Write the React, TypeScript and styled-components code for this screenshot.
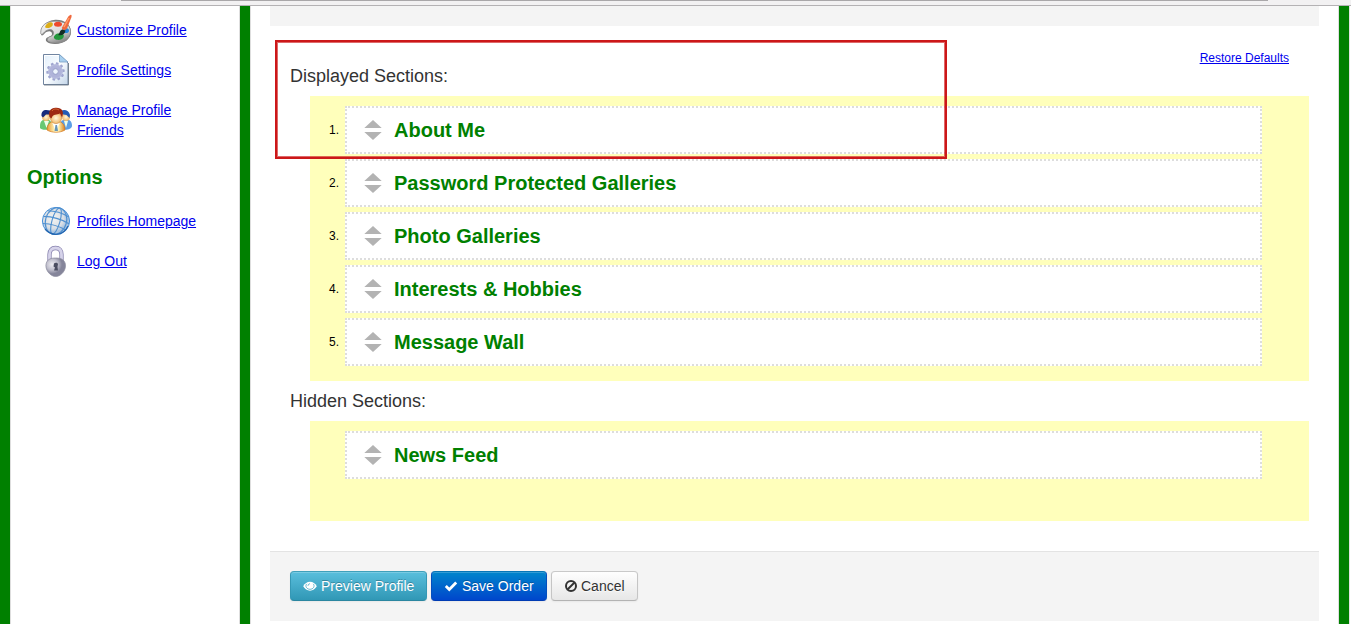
import React from "react";
import styled, { createGlobalStyle } from "styled-components";

const GlobalStyle = createGlobalStyle`
  * { box-sizing: border-box; }
  body {
    margin: 0;
    overflow: hidden;
    background: #fff;
    color: #333;
    font: 14px/20px "Liberation Sans", Arial, sans-serif;
  }
`;

const Page = styled.div`
  display: flex;
  flex-direction: column;
  width: 1351px;
  height: 624px;
  overflow: hidden;
`;

const BrowserEdge = styled.div`
  flex: none;
  height: 6px;
  padding: 0 83px 0 121px;
  background: #f2f1f2;
  border-bottom: 1px solid #b4b2b4;
`;

const AddressLine = styled.div`
  height: 1px;
  background: #a9a7a9;
`;

const Columns = styled.div`
  flex: 1;
  display: flex;
  min-height: 0;
`;

const Rail = styled.div`
  flex: none;
  width: 10px;
  background: #008000;
`;

const OuterEdge = styled.div`
  flex: none;
  width: 2px;
  background: #fff;
  border-left: 1px solid #e4e4e4;
`;

const Sidebar = styled.aside`
  flex: none;
  width: 230px;
  padding: 4px 16px 0;
  border: solid #dedede;
  border-width: 0 1px;
`;

const NavList = styled.nav`
  display: flex;
  flex-direction: column;
  padding-left: 10px;
`;

const NavRow = styled.div<{ $tall?: boolean }>`
  display: flex;
  align-items: center;
  height: ${(p) => (p.$tall ? 60 : 40)}px;
  gap: 5px;
  padding-left: 3px;
  svg { flex: none; }
`;

const Link = styled.a`
  color: #0000ee;
  text-decoration: underline;
  cursor: pointer;
`;

const NavLink = styled(Link)`
  width: 125px;
`;

const SideHeading = styled.h3`
  margin: 17px 0 14px;
  color: #008000;
  font-size: 20px;
  line-height: 20px;
`;

const Main = styled.main`
  flex: 1;
  display: flex;
  flex-direction: column;
  padding: 0 19px;
  border: solid #dedede;
  border-width: 0 1px;
`;

const TopPanel = styled.div`
  flex: none;
  height: 20px;
  background: #f4f4f4;
`;

const Content = styled.section`
  position: relative;
  flex: none;
  height: 525px;
  padding: 40px 10px 0 20px;
`;

const TitleRow = styled.div`
  display: flex;
  justify-content: space-between;
  height: 30px;
  padding-right: 20px;
`;

const Title = styled.h4`
  margin: 0;
  color: #333;
  font-size: 18px;
  font-weight: 400;
  line-height: 20px;
`;

const RestoreLink = styled(Link)`
  align-self: flex-start;
  margin-top: -18px;
  font-size: 12px;
`;

const DropZone = styled.ol<{ $height: number }>`
  display: flex;
  flex-direction: column;
  gap: 5px;
  height: ${(p) => p.$height}px;
  margin: 0 0 10px 20px;
  padding: 10px 47px 0 0;
  background: #ffffbb;
  list-style: none;
`;

const SectionItem = styled.li`
  display: grid;
  grid-template-columns: 29px 1fr;
  column-gap: 6px;
  align-items: center;
  height: 48px;
`;

const Ordinal = styled.span`
  color: #000;
  font-size: 12px;
  text-align: right;
`;

const SectionCard = styled.div`
  display: flex;
  align-items: center;
  gap: 12px;
  height: 48px;
  padding-left: 17px;
  background: #fff;
  border: 2px dotted #ddd;
  color: #008000;
  font-size: 20px;
  font-weight: 700;
  cursor: move;
`;

const Highlight = styled.div`
  position: absolute;
  top: 14px;
  left: 5px;
  width: 672px;
  height: 119px;
  border: 2px solid #cc1719;
  box-shadow: inset 0 0 0 1px rgba(204, 23, 25, 0.65);
  pointer-events: none;
`;

const FormActions = styled.footer`
  flex: none;
  display: flex;
  align-items: flex-start;
  gap: 4px;
  height: 70px;
  padding: 19px 20px;
  background: #f4f4f4;
  border-top: 1px solid #e3e3e3;
`;

type Tone = "info" | "primary" | "plain";

const tones: Record<Tone, string> = {
  info: `
    width: 137px; color: #fff;
    background-image: linear-gradient(#5bc0de, #2f96b4);
    border-color: #3fa0bb #3598b5 #2a86a0;
    text-shadow: 0 -1px 0 rgba(0,0,0,.25);`,
  primary: `
    width: 116px; color: #fff;
    background-image: linear-gradient(#0088cc, #0044cc);
    border-color: #0676b7 #044fbe #003bb3;
    text-shadow: 0 -1px 0 rgba(0,0,0,.25);`,
  plain: `
    width: 87px; color: #333;
    background-image: linear-gradient(#fff, #e6e6e6);
    border-color: #c9c9c9 #c5c5c5 #b3b3b3;
    text-shadow: 0 1px 1px rgba(255,255,255,.75);`,
};

const Button = styled.button<{ $tone: Tone }>`
  display: flex;
  align-items: center;
  height: 30px;
  padding: 0 0 0 12px;
  gap: ${(p) => (p.$tone === "plain" ? 3 : 4)}px;
  border: 1px solid;
  border-radius: 4px;
  box-shadow: inset 0 1px 0 rgba(255,255,255,.2), 0 1px 2px rgba(0,0,0,.05);
  background-origin: border-box;
  font: 14px/20px "Liberation Sans", Arial, sans-serif;
  white-space: nowrap;
  ${(p) => tones[p.$tone]}
  svg { flex: none; }
`;

const PaletteIcon = () => (
  <svg width="32" height="32" viewBox="0 0 32 32">
    <defs>
      <linearGradient id="pal" x1="0" y1="0" x2="0.5" y2="1">
        <stop offset="0" stopColor="#fbfbfb" />
        <stop offset="0.65" stopColor="#d9d9d9" />
        <stop offset="1" stopColor="#8f8f8f" />
      </linearGradient>
    </defs>
    <path d="M1 20C0 13 6 7 14 6c9-1 17 4 17 12 0 7-7 12-16 12-7 0-10-3-9-5 1-3 6-2 6-5 0-4-5-3-7-1-2 3-4 3-4 1z" fill="#777" />
    <path d="M.7 18.500C.7 11 7 7.500 14 7.200c9-.5 16.500 3 16.500 10.300 0 7-6.500 11.500-14.500 11.500-6 0-9.500-2-8.500-4 1-3 6-2 6-6 0-5-6-4-9-1-2 3-4 3-3.800.5z" fill="url(#pal)" stroke="#8c8c8c" strokeWidth=".8" />
    <path d="M5 13c1-3 3-4 4-4.500 3-1 4.500 0 3.500 3-1 2.500-6.500 3.500-7.500 1.500z" fill="#dcae18" />
    <ellipse cx="18" cy="10.200" rx="4" ry="2.500" fill="#ee4a2c" />
    <ellipse cx="25.500" cy="16.500" rx="3.500" ry="2.600" fill="#2384d8" />
    <path d="M14 22.500c1-3 5-4 8-3 3 1 2 5-1 6-3 1-8 0-7-3z" fill="#24973c" />
    <path d="M18 21c2-1 1-4 4-5.500l3.500 1C25 20 22 22 18 21z" fill="#132d24" />
    <path d="M22 13.500L28 3c2-3 4.500-3.500 3.300.5L27 14.500c-1.500 2.500-5.500 1.500-5-1z" fill="#f0693e" />
    <path d="M24 13l5-9" stroke="#ff9d6a" strokeWidth="1.400" />
  </svg>
);

const SettingsIcon = () => {
  const teeth = Array.from({ length: 10 }, (_, i) => i * 36);
  return (
    <svg width="32" height="32" viewBox="0 0 32 32">
      <defs>
        <linearGradient id="doc" x1="0" y1="0" x2="1" y2="1">
          <stop offset="0" stopColor="#e2effb" />
          <stop offset=".5" stopColor="#fafdff" />
          <stop offset="1" stopColor="#c4d6e9" />
        </linearGradient>
      </defs>
      <path d="M3.500.5h16L28 9v21.500H3.500z" fill="url(#doc)" stroke="#7185a1" />
      <path d="M4.500 29.500V1.500H19" fill="none" stroke="#fff" />
      <path d="M19.500.5V8H28z" fill="#a8d0ef" stroke="#7c9fc3" strokeWidth=".8" />
      <path d="M28.500 9v22H4" fill="none" stroke="#65717f" strokeWidth=".8" />
      <g transform="translate(15.500 17.500)">
        {teeth.map((angle) => (
          <rect key={angle} x="-1.400" y="-9.200" width="2.800" height="4" rx=".7" fill="#a0a6d0" transform={`rotate(${angle + 12})`} />
        ))}
        <circle r="5" fill="none" stroke="#b0b4da" strokeWidth="4.400" />
        <circle r="6.800" fill="none" stroke="#bcc1e1" strokeWidth=".8" />
        <circle r="2.800" fill="#eef5fd" stroke="#858dbd" strokeWidth=".8" />
      </g>
    </svg>
  );
};

const FriendsIcon = () => (
  <svg width="32" height="32" viewBox="0 0 32 32">
    <defs>
      <radialGradient id="skin"><stop offset="0" stopColor="#fff6dc" /><stop offset="1" stopColor="#f2b968" /></radialGradient>
      <linearGradient id="robe" x1="0" x2="1"><stop offset="0" stopColor="#e99632" /><stop offset=".4" stopColor="#fff2b2" /><stop offset=".65" stopColor="#fff2b2" /><stop offset="1" stopColor="#dc7f1e" /></linearGradient>
    </defs>
    <g transform="translate(0 -1)">
      <path d="M0 23c0-5 3-7 6-7s6 2 6 7c0 4-10 5-12 2z" fill="#67c873" />
      <path d="M20 23c0-5 3-7 6-7s6 2 6 7c0 4-10 5-12 2z" fill="#5c9ee6" />
      <path d="M4 18l2.500 7L9 18M24 18l2 7 2-7" fill="#edffe9" />
      <circle cx="6" cy="14" r="4" fill="url(#skin)" /><circle cx="26" cy="14" r="4" fill="url(#skin)" />
      <path d="M1.500 13C1 7 5 6 10 7.500l1 4-5 0-3 3z" fill="#182c7d" />
      <path d="M21 8c3-2 8-1 9 4l-.5 3-3-3-6-1z" fill="#245bb5" />
      <path d="M7 27c0-6 4-9 9-9s9 3 9 9c-5 3-13 3-18 0z" fill="url(#robe)" stroke="#d47a1e" strokeWidth=".7" />
      <path d="M12.500 20l3.500 9 3.500-9z" fill="#fff" /><path d="M15.500 22h1.500l1 6h-3.500z" fill="#6895b5" />
      <circle cx="16" cy="15" r="5.600" fill="url(#skin)" stroke="#bd742f" strokeWidth=".5" />
      <path d="M9.500 14C8 8 11 4.500 16 4.800c6-.2 8.500 4 6 9.700l-2-4c-3 2-7-.5-8.500 5z" fill="#9d2710" />
      <path d="M12 8c2-3 5-2 7-1" fill="none" stroke="#d66a34" />
    </g>
  </svg>
);

const GlobeIcon = () => (
  <svg width="32" height="32" viewBox="0 0 32 32">
    <defs><radialGradient id="globe" cx=".4" cy=".4"><stop stopColor="#f4f4f2" /><stop offset=".75" stopColor="#dadfe5" /><stop offset="1" stopColor="#a9c4e0" /></radialGradient></defs>
    <circle cx="16" cy="16" r="13.600" fill="url(#globe)" stroke="#4a93dc" />
    <g fill="none" stroke="#4f90d0" strokeWidth="1.100" transform="rotate(16 16 16)">
      <ellipse cx="16" cy="16" rx="4" ry="13.500" />
      <ellipse cx="16" cy="16" rx="10.500" ry="13.500" />
      <path d="M5 8.500q11-3 22 0M2.800 15q13-3.500 26.400 0M4 22q12-3 24 0" />
    </g>
    <path d="M5 24c6 7 18 8 23-3" fill="none" stroke="#2365af" strokeWidth="1.200" />
  </svg>
);

const LockIcon = () => (
  <svg width="32" height="32" viewBox="0 0 32 32">
    <defs>
      <radialGradient id="lock" cx=".32" cy=".35"><stop stopColor="#eeedf2" /><stop offset=".6" stopColor="#bebdcb" /><stop offset="1" stopColor="#85859a" /></radialGradient>
    </defs>
    <path d="M9.500 17V9.500c0-4 2.200-6.500 6-6.500s6 2.500 6 6.500V17" fill="none" stroke="#8883ae" strokeWidth="4.300" />
    <path d="M9.500 17V9.500c0-4 2.200-6.500 6-6.500s6 2.500 6 6.500V17" fill="none" stroke="#d6d3ea" strokeWidth="2.800" />
    <path d="M6.300 18c1.500-4 4.800-5 9.400-5s7.900 1 9.400 5c2 6-3.500 13.500-9.400 13.500S4.300 24 6.300 18z" fill="url(#lock)" stroke="#8b8b9d" strokeWidth=".7" />
    <path d="M14 18.500c1-1 3.500-1 4 .5l-.5 3 .5 3.500h-4l1-3-1.500-1z" fill="#4b4d60" />
  </svg>
);

const SortIcon = () => (
  <svg width="18" height="20" viewBox="0 0 18 20" fill="#b3b3b3">
    <path d="M.3 8L9 0l8.700 8zM.3 12h17.400L9 20z" />
  </svg>
);

const EyeIcon = () => (
  <svg width="14" height="14" viewBox="0 0 14 14">
    <path d="M.2 7.300C1.800 4.500 4.100 2.800 7 2.800s5.200 1.700 6.800 4.500C12.200 10.100 9.900 11.700 7 11.700S1.800 10.100.2 7.300z" fill="#fff" />
    <path d="M3.800 4.900C1.700 7 3.700 10.300 7 10.300s5.300-3.300 3.200-5.400" fill="none" stroke="#43a6c3" strokeWidth=".8" />
    <path d="M5 6.800C5 5.600 5.800 4.800 7 4.800" fill="none" stroke="#43a6c3" strokeWidth=".8" />
  </svg>
);

const CheckIcon = () => (
  <svg width="14" height="14" viewBox="0 0 14 14">
    <path d="M.8 7.900l2-2 2.500 2.500 5.900-5.900 2 2-7.900 8z" fill="#fff" />
  </svg>
);

const BanIcon = () => (
  <svg width="14" height="14" viewBox="0 0 14 14" fill="none" stroke="#333" strokeWidth="2">
    <circle cx="7" cy="7" r="5" /><path d="M3.500 10.500l7-7" />
  </svg>
);

const displayedSections = ["About Me", "Password Protected Galleries", "Photo Galleries", "Interests & Hobbies", "Message Wall"];

const SortableSection = ({ name, position }: { name: string; position?: number }) => (
  <SectionItem>
    <Ordinal>{position ? `${position}.` : ""}</Ordinal>
    <SectionCard><SortIcon />{name}</SectionCard>
  </SectionItem>
);

export default function App() {
  return (
    <>
      <GlobalStyle />
      <Page>
        <BrowserEdge><AddressLine /></BrowserEdge>
        <Columns>
          <Rail />
          <Sidebar>
            <NavList>
              <NavRow><PaletteIcon /><NavLink>Customize Profile</NavLink></NavRow>
              <NavRow><SettingsIcon /><NavLink>Profile Settings</NavLink></NavRow>
              <NavRow $tall><FriendsIcon /><NavLink>Manage Profile Friends</NavLink></NavRow>
            </NavList>
            <SideHeading>Options</SideHeading>
            <NavList>
              <NavRow><GlobeIcon /><NavLink>Profiles Homepage</NavLink></NavRow>
              <NavRow><LockIcon /><NavLink>Log Out</NavLink></NavRow>
            </NavList>
          </Sidebar>
          <Rail />
          <Main>
            <TopPanel />
            <Content>
              <TitleRow>
                <Title>Displayed Sections:</Title>
                <RestoreLink>Restore Defaults</RestoreLink>
              </TitleRow>
              <DropZone $height={285}>
                {displayedSections.map((name, i) => <SortableSection key={name} name={name} position={i + 1} />)}
              </DropZone>
              <TitleRow><Title>Hidden Sections:</Title></TitleRow>
              <DropZone $height={100}><SortableSection name="News Feed" /></DropZone>
              <Highlight />
            </Content>
            <FormActions>
              <Button $tone="info"><EyeIcon />Preview Profile</Button>
              <Button $tone="primary"><CheckIcon />Save Order</Button>
              <Button $tone="plain"><BanIcon />Cancel</Button>
            </FormActions>
          </Main>
          <Rail />
          <OuterEdge />
        </Columns>
      </Page>
    </>
  );
}
